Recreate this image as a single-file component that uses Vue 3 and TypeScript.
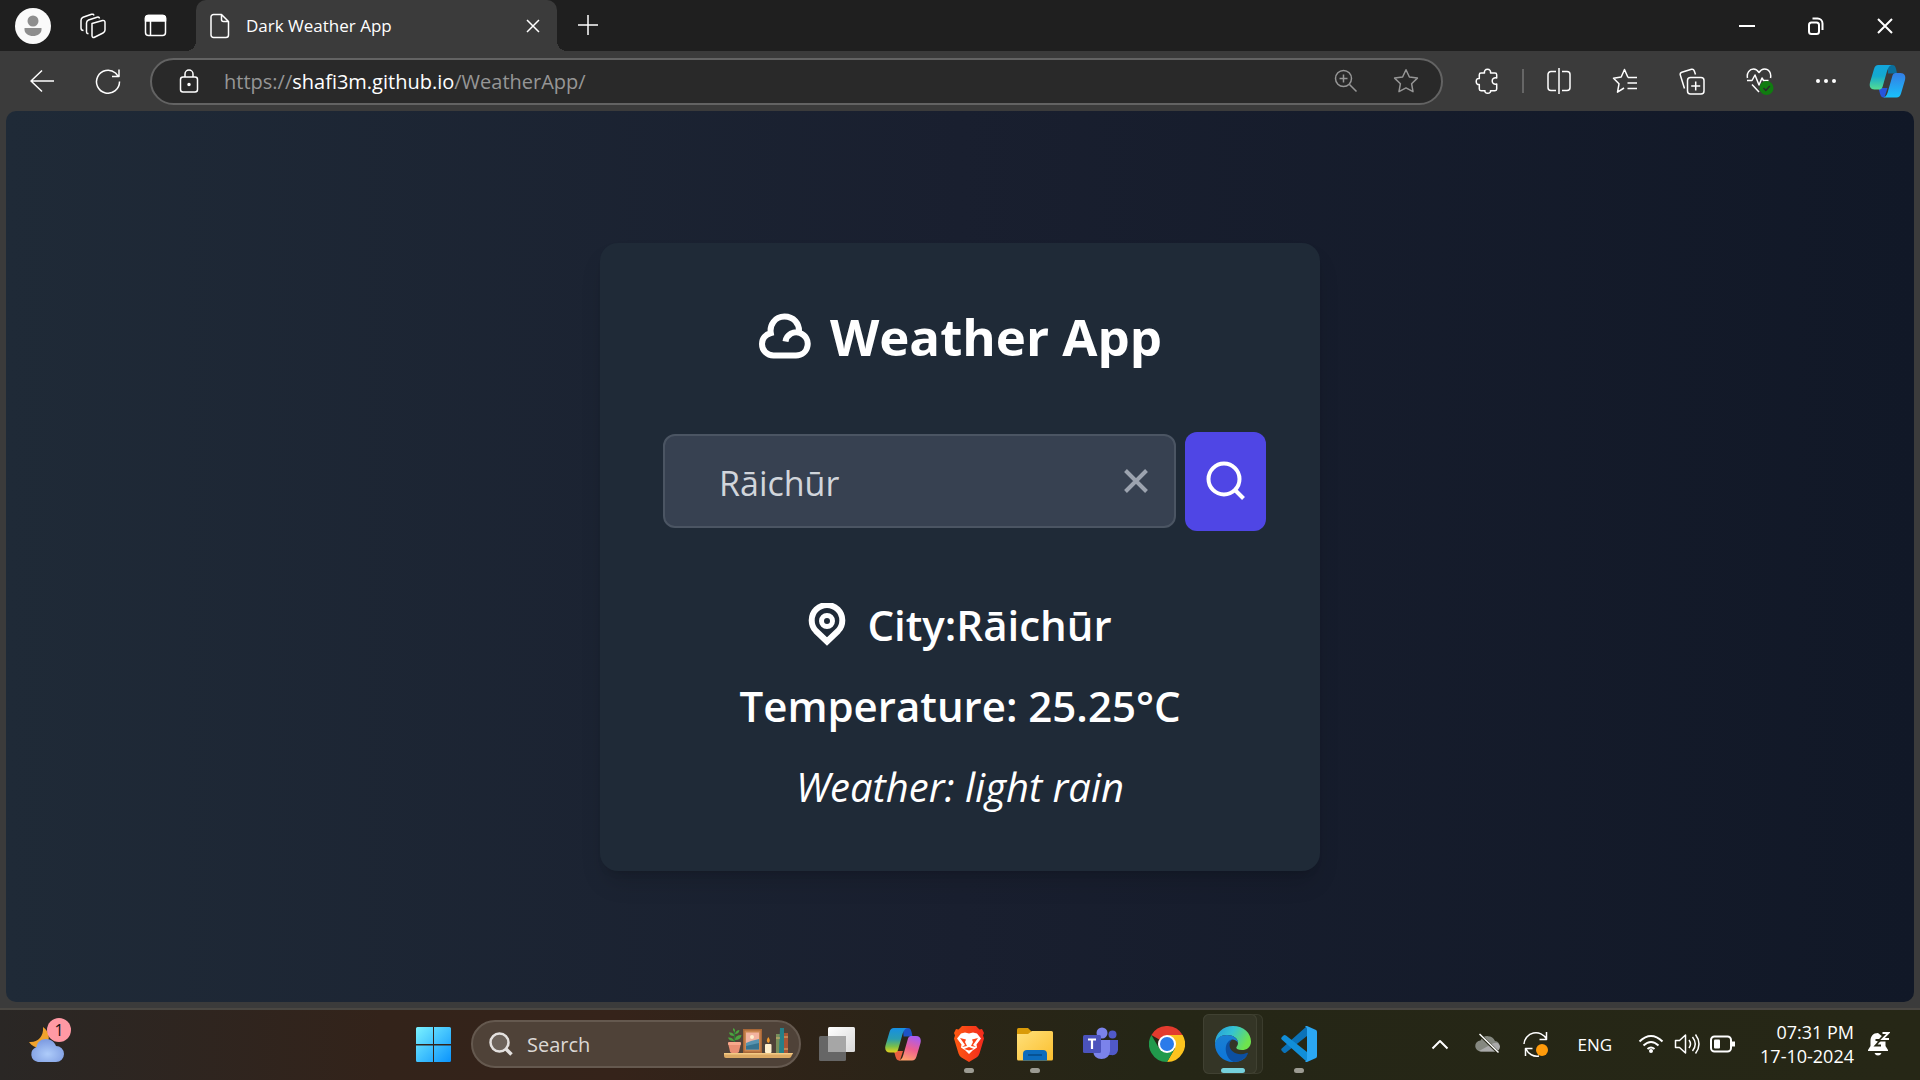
<script setup lang="ts">
import { ref } from 'vue'

interface Report {
  city: string
  temperature: number
  description: string
}

const query = ref('Rāichūr')
const taskSearch = ref('')
const report = ref<Report>({ city: 'Rāichūr', temperature: 25.25, description: 'light rain' })

function search() {
  const name = query.value.trim()
  if (name) report.value = { ...report.value, city: name }
}
</script>

<template>
  <div class="screen">
    <header class="tabstrip">
      <div class="strip-tools">
        <button class="plain avatar" aria-label="Profile">
          <svg width="36" height="36" viewBox="0 0 36 36">
            <circle cx="18" cy="18" r="18" fill="#fafafa" />
            <circle cx="18" cy="13" r="5.5" fill="#8e8e8e" />
            <path d="M9.5 20h17v1.5c0 4-4 6.500-8.500 6.500s-8.500-2.500-8.500-6.500z" fill="#8e8e8e" />
          </svg>
        </button>
        <button class="plain" aria-label="Workspaces">
          <svg width="26" height="26" viewBox="0 0 26 26" class="line">
            <path d="M12 10.500 22.500 7.500Q25 7 25 9.500V17Q25 19 23 20L15 24Q12 25.500 12 22.500Z" />
            <path d="M8.500 20.500Q6.500 21 6.500 18.500V10Q6.500 7.800 8.500 7L17 4.200Q19.200 3.600 19.500 5.500" />
            <path d="M3.500 17.500Q1 17.500 1 15V7.500Q1 5 3 4.200L11.500 1.300Q13.500.7 14 2.500" />
          </svg>
        </button>
        <button class="plain" aria-label="Tab actions menu">
          <svg width="23" height="23" viewBox="0 0 23 23" class="line">
            <rect x="1.500" y="1.500" width="20" height="20" rx="3" />
            <path d="M1.500 7V4a2.500 2.500 0 0 1 2.500-2.500h15A2.500 2.500 0 0 1 21.500 4v3z" fill="#fff" />
            <path d="M6.500 7v14" />
          </svg>
        </button>
      </div>
      <div class="tab">
        <svg width="20" height="26" viewBox="0 0 20 26" class="line">
          <path d="M3.500 1.500h8l7 7v13.500a2.500 2.500 0 0 1-2.500 2.500h-12.500A2.500 2.500 0 0 1 1 22V4a2.500 2.500 0 0 1 2.500-2.500zM11.500 1.500V6.500a2 2 0 0 0 2 2h5" />
        </svg>
        <span class="tab-title">Dark Weather App</span>
        <button class="plain" aria-label="Close tab">
          <svg width="14" height="14" viewBox="0 0 14 14" class="line"><path d="M1 1l12 12M13 1 1 13" /></svg>
        </button>
      </div>
      <button class="plain new-tab" aria-label="New tab">
        <svg width="22" height="22" viewBox="0 0 22 22" class="line"><path d="M11 1v20M1 11h20" /></svg>
      </button>
      <div class="window-buttons">
        <button class="plain" aria-label="Minimize">
          <svg width="16" height="16" viewBox="0 0 16 16" class="line bold"><path d="M0 8h16" /></svg>
        </button>
        <button class="plain" aria-label="Restore">
          <svg width="16" height="18" viewBox="0 0 16 18" class="line bold">
            <rect x="1" y="5.500" width="10" height="11.500" rx="2.500" />
            <path d="M4.500 1.500h5a5 5 0 0 1 5 5V13" />
          </svg>
        </button>
        <button class="plain" aria-label="Close window">
          <svg width="16" height="16" viewBox="0 0 16 16" class="line bold"><path d="M1 1l14 14M15 1 1 15" /></svg>
        </button>
      </div>
    </header>

    <nav class="toolbar">
      <button class="plain back" aria-label="Back">
        <svg width="26" height="24" viewBox="0 0 26 24" class="line"><path d="M25 12H2M13 1.500 2 12l11 10.500" /></svg>
      </button>
      <button class="plain refresh" aria-label="Refresh">
        <svg width="26" height="26" viewBox="0 0 26 26" class="line">
          <path d="M24.500 13.500A11.500 11.500 0 1 1 20.500 5L23.500 8.500M24 1.500v7h-7" />
        </svg>
      </button>
      <div class="address">
        <button class="plain" aria-label="Site information">
          <svg width="20" height="24" viewBox="0 0 20 24" class="line">
            <rect x="1.500" y="8" width="17" height="15" rx="2.500" />
            <path d="M6 8V5a4 4 0 0 1 8 0v3" />
            <circle cx="10" cy="15.500" r="1" fill="#fff" />
          </svg>
        </button>
        <div class="url" role="textbox" contenteditable="true" aria-label="Address" spellcheck="false">https://<b>shafi3m.github.io</b>/WeatherApp/</div>
        <button class="plain" aria-label="Zoom">
          <svg width="24" height="24" viewBox="0 0 24 24" class="line dim">
            <circle cx="9.500" cy="9.500" r="8" /><path d="M15.500 15.500 22.500 22.500M5.500 9.500h8M9.500 5.500v8" />
          </svg>
        </button>
        <button class="plain" aria-label="Add to favorites">
          <svg width="26" height="26" viewBox="0 0 26 26" class="line dim">
            <path d="M13 1.800 16.400 9 24.400 10.100 18.600 15.700 20 23.700 13 19.900 6 23.700 7.400 15.700 1.600 10.100 9.600 9z" />
          </svg>
        </button>
      </div>
      <div class="extensions">
        <button class="plain" aria-label="Extensions">
          <svg width="24" height="26" viewBox="0 0 24 26" class="line">
            <path d="M6 5h3.500c-.5-2 .8-3.800 3-3.800S16 3 15.500 5H20a1.700 1.700 0 0 1 1.700 1.700V10c-2.700-.6-4.500.8-4.500 3s1.800 3.600 4.500 3v5a1.700 1.700 0 0 1-1.700 1.700h-4.500c.5 1.400-.8 2.500-2.800 2.500S9.500 24 10 22.700H6A1.700 1.700 0 0 1 4.300 21v-4.500C2.500 17 1.200 15.500 1.200 13.500S2.500 10 4.300 10.500V6.700A1.700 1.700 0 0 1 6 5z" />
          </svg>
        </button>
        <span class="divider"></span>
        <button class="plain" aria-label="Split screen">
          <svg width="24" height="28" viewBox="0 0 24 28" class="line">
            <path d="M9 4.500H4A3 3 0 0 0 1 7.500v13a3 3 0 0 0 3 3h5M15 4.500h5a3 3 0 0 1 3 3v13a3 3 0 0 1-3 3h-5M12 1v26" />
          </svg>
        </button>
        <button class="plain" aria-label="Favorites">
          <svg width="26" height="26" viewBox="0 0 26 26" class="line">
            <path d="M16 9.500 12.500 1.500 9.200 9 1.500 10.200 7 15.800 5.500 24.200 12 20M16 9.500h9M15.500 15h9.500M15.500 20.500h9.500" />
          </svg>
        </button>
        <button class="plain" aria-label="Collections">
          <svg width="26" height="27" viewBox="0 0 26 27" class="line">
            <rect x="8.500" y="9.500" width="16.500" height="16.500" rx="3" />
            <path d="M16.700 13.500v9M12.200 18h9M5.500 20.500 1.300 7Q.7 5 2.800 4.200L12.500 1.300Q14.500.8 15.200 2.800L16.500 6.500" />
          </svg>
        </button>
        <button class="plain" aria-label="Browser essentials">
          <svg width="28" height="28" viewBox="0 0 28 28" class="line">
            <path d="M1.500 11C.5 6 3.500 2 7.500 2c2.500 0 4.200 1.500 5.500 3.500C14.300 3.500 16 2 18.500 2c4.500 0 7 4 6 9M1 13.500h5l3-5.500 4 10 3-7 1.500 2.500h5M6 17.500l7 7.500" />
            <circle cx="20.500" cy="21" r="7" fill="#107c10" stroke="none" />
            <path d="M17.500 21l2.300 2.500 4-4.500" stroke="#2b2b2b" />
          </svg>
        </button>
        <button class="plain" aria-label="Settings and more">
          <svg width="22" height="6" viewBox="0 0 22 6" fill="#fff">
            <circle cx="3" cy="3" r="2" /><circle cx="11" cy="3" r="2" /><circle cx="19" cy="3" r="2" />
          </svg>
        </button>
        <button class="plain copilot" aria-label="Copilot">
          <svg width="37" height="34" viewBox="0 0 36 34">
            <defs>
              <linearGradient id="ca" x1="0" y1="0" x2="0" y2="1"><stop offset="0" stop-color="#12a5dc" /><stop offset=".45" stop-color="#14a9cf" /><stop offset="1" stop-color="#55dd91" /></linearGradient>
              <linearGradient id="cb" x1="0" y1="0" x2="0" y2="1"><stop offset="0" stop-color="#347de5" /><stop offset="1" stop-color="#19c1fb" /></linearGradient>
            </defs>
            <path d="M18 1h5c3 0 3.500 3 4.500 8.500h-9z" fill="#0b6f9c" />
            <path d="M9 24h9l-3 9.500h-1c-3 0-3.500-4-5-9.500z" fill="#2654dc" />
            <path d="M9 1h13c-3 1-4 4-5 8l-4 14c-.7 2-2 2.500-4 2.500H5c-4 0-5.500-3-4.500-7L4.500 5c.8-2.700 2-4 4.500-4z" fill="url(#ca)" />
            <path d="M27 33.500H14c3-1 4-4 5-8l4-14c.7-2 2-2.500 4-2.500h4c4 0 5.500 3 4.500 7L31.500 29.500c-.8 2.700-2 4-4.500 4z" fill="url(#cb)" />
          </svg>
        </button>
      </div>
    </nav>

    <div class="frame">
      <main class="page">
        <section class="card">
          <h1>
            <svg width="54" height="48" viewBox="0 0 54 48" fill="none" stroke="#fff" stroke-width="6">
              <path d="M27.500 29.500C28.500 22.500 36 18.500 42 21C48 23.500 50.500 28.500 49.500 34C48.500 39.500 44 43.500 38 43.500H15.500C9 43.500 4 38.500 4 32C4 26.500 7.500 22.500 12.800 21C11.500 13.500 16.500 4.500 26.500 4.500C35.500 4.500 41.500 11.500 41 20" />
            </svg>
            <span>Weather App</span>
          </h1>
          <form class="search" @submit.prevent="search">
            <div class="field">
              <input v-model="query" type="text" aria-label="City name" spellcheck="false" />
              <button type="button" class="plain" aria-label="Clear" @click="query = ''">
                <svg width="24" height="24" viewBox="0 0 24 24" fill="none" stroke="#9ca3af" stroke-width="4"><path d="M1.500 1.500l21 21M22.500 1.500l-21 21" /></svg>
              </button>
            </div>
            <button class="go" aria-label="Search">
              <svg width="40" height="40" viewBox="0 0 40 40" fill="none" stroke="#fff" stroke-width="4"><circle cx="18" cy="18" r="15.500" /><path d="M28.500 28.500 37.500 37.500" /></svg>
            </button>
          </form>
          <div class="report">
            <h2>
              <svg width="38" height="44" viewBox="0 0 38 44" fill="none" stroke="#fff" stroke-width="6">
                <path d="M19 38.500 8 28A15.300 15.300 0 1 1 30 28Z" /><circle cx="19" cy="18" r="5.500" stroke-width="5" />
              </svg>
              <span>City:{{ report.city }}</span>
            </h2>
            <p class="temp">Temperature: {{ report.temperature }}°C</p>
            <p class="sky">Weather: {{ report.description }}</p>
          </div>
        </section>
      </main>
    </div>

    <footer class="taskbar">
      <div class="widget">
        <button class="plain" aria-label="Weather widget, 1 alert">
          <svg width="38" height="38" viewBox="0 0 38 38">
            <defs><radialGradient id="wc" cx=".5" cy=".65" r=".6"><stop offset="0" stop-color="#aeccfa" /><stop offset="1" stop-color="#7f9de2" /></radialGradient></defs>
            <path d="M14 2c6 4 8 12 3 18-5 5-13 3-17-3C8 18 15 12 14 2z" fill="#f0a22c" />
            <path d="M9 37a9 8 0 0 1-1.500-15C8 17 12 14 17 14c5 0 8.500 3 10 7a8 8 0 0 1 0 16z" fill="url(#wc)" />
          </svg>
          <span class="badge">1</span>
        </button>
      </div>
      <div class="apps">
        <button class="plain start" aria-label="Start">
          <svg width="35" height="35" viewBox="0 0 35 35">
            <defs><linearGradient id="wn" x1="0" y1="0" x2="35" y2="35" gradientUnits="userSpaceOnUse"><stop offset="0" stop-color="#7bf2ff" /><stop offset="1" stop-color="#0a93fc" /></linearGradient></defs>
            <path d="M1.500 0H17v17H0V1.500Q0 0 1.500 0zM18 0h15.500Q35 0 35 1.500V17H18zM0 18.500h17V35H1.500Q0 35 0 33.500zM18 18.500h17v15q0 1.500-1.500 1.500H18z" fill="url(#wn)" />
          </svg>
        </button>
        <label class="task-search">
          <svg width="24" height="24" viewBox="0 0 24 24" fill="none" stroke="#e4e1df" stroke-width="2.500"><circle cx="10.500" cy="10.500" r="9" fill="#6d635b" /><path d="M17 17l5.500 5.500" stroke-width="3.500" /></svg>
          <input v-model="taskSearch" type="text" placeholder="Search" aria-label="Search" />
          <svg width="70" height="32" viewBox="0 0 70 32">
            <path d="M0 25h69l-2 4q-.6 1-2 1H2Q0 30 0 28z" fill="#dba964" /><path d="M0 25h69l-1 1.500H0z" fill="#f3c984" />
            <path d="M4 15h13l-2 8.500q-.5 1.500-2 1.500H8q-1.500 0-2-1.500z" fill="#e98f73" /><rect x="4" y="14" width="13" height="3" rx="1" fill="#f7a78b" />
            <path d="M10.500 14V3" stroke="#2f7a35" stroke-width="1.500" />
            <path d="M10 13Q5 13 4 9.500 9 9 10 13zM11 12q0-5 6.500-5Q17 12 11 12zM10 8Q5.500 8 5 4.500 10 4 10 8zM11 6Q12 2 15.500 2 15 6 11 6zM10.500 4Q8 2 9.500 0 12 2 10.500 4z" fill="#4ca33f" />
            <rect x="19" y="1" width="19" height="24" fill="#a86738" /><rect x="20.500" y="2.500" width="16" height="21" fill="#cb8750" /><rect x="22" y="4.500" width="13" height="17" fill="#f2b3a0" />
            <path d="M22 15l5-2 8-2v10.500H22z" fill="#5794b0" /><path d="M22 18l13-3v6.500H22z" fill="#35738f" /><circle cx="28" cy="9" r="2" fill="#fff0ce" />
            <rect x="41" y="16" width="6.500" height="9" rx="1" fill="#fff0cd" /><path d="M44.300 9q3 4 0 6-3-2 0-6z" fill="#f39a2b" />
            <rect x="52" y="6" width="4" height="19" fill="#788e5b" /><path d="M56 0h4v25h-5z" fill="#267f88" /><rect x="60" y="5" width="4" height="20" fill="#a75535" /><path d="M60 9h4M60 21h4M52 10h4" stroke="#ddb46f" />
          </svg>
        </label>
        <button class="plain app" aria-label="Task view">
          <svg width="36" height="36" viewBox="0 0 36 36">
            <defs><linearGradient id="tv" x1="0" y1="0" x2="1" y2="1"><stop offset="0" stop-color="#fff" /><stop offset="1" stop-color="#d8d8d8" /></linearGradient></defs>
            <rect x="9" y="1" width="27" height="25" rx="1.500" fill="url(#tv)" /><rect y="10" width="27" height="25" rx="1.500" fill="#666" /><path d="M9 10h18v16H9z" fill="#a6a6a6" />
          </svg>
        </button>
        <button class="plain app" aria-label="Copilot">
          <svg width="36" height="34" viewBox="0 0 36 34">
            <defs>
              <linearGradient id="cc" x1="0" y1="0" x2="0" y2="1"><stop offset="0" stop-color="#168fe4" /><stop offset=".45" stop-color="#2a9db0" /><stop offset=".75" stop-color="#78be4c" /><stop offset="1" stop-color="#e6d21c" /></linearGradient>
              <linearGradient id="cd" x1=".6" y1="0" x2=".3" y2="1"><stop offset="0" stop-color="#a95cf0" /><stop offset=".5" stop-color="#ed5f91" /><stop offset="1" stop-color="#ffa26b" /></linearGradient>
            </defs>
            <path d="M18 1h5c3 0 3.500 3 4.500 8.500h-9z" fill="#1d53c7" />
            <path d="M9 24h9l-3 9.500h-1c-3 0-3.500-4-5-9.500z" fill="#e95d3f" />
            <path d="M9 1h13c-3 1-4 4-5 8l-4 14c-.7 2-2 2.500-4 2.500H5c-4 0-5.500-3-4.500-7L4.500 5c.8-2.700 2-4 4.500-4z" fill="url(#cc)" />
            <path d="M27 33.500H14c3-1 4-4 5-8l4-14c.7-2 2-2.500 4-2.500h4c4 0 5.500 3 4.500 7L31.500 29.500c-.8 2.700-2 4-4.500 4z" fill="url(#cd)" />
          </svg>
        </button>
        <button class="plain app running" aria-label="Brave">
          <svg width="32" height="36" viewBox="0 0 32 36">
            <defs><linearGradient id="br"><stop offset="0" stop-color="#ff5a12" /><stop offset="1" stop-color="#f32a1d" /></linearGradient></defs>
            <path d="M9 0h14l3.500 3.500 2.500-.5 2 4-1 2.500 1 3-4.500 15q-.8 2.500-3 4L16 36l-7.500-4.500q-2.200-1.500-3-4L1 12.500l1-3L1 7l2-4 2.500.5z" fill="url(#br)" />
            <path d="M16 7.500 20 6.500l4 1 4 5-4.500 6 .5 3-4.500 3L16 28l-3.500-3.500-4.500-3 .5-3-4.500-6 4-5 4-1z" fill="#fff" />
            <path d="M7 12l6 1.500-1 2.500 2 4-5 1 3-2zM25 12l-6 1.500 1 2.500-2 4 5 1-3-2zM11 23l5-2 5 2-5 1.500z" fill="#fb4418" />
          </svg>
        </button>
        <button class="plain app running" aria-label="File Explorer">
          <svg width="36" height="36" viewBox="0 0 36 36">
            <defs><linearGradient id="fe" x1="0" y1="0" x2="1" y2="1"><stop offset="0" stop-color="#ffe07b" /><stop offset="1" stop-color="#fbbf2e" /></linearGradient></defs>
            <path d="M0 3.500Q0 2 1.500 2H11l4 4v3H0z" fill="#d99a08" /><path d="M0 8h11l4-3h19.500Q36 5 36 6.500V33q0 1.500-1.500 1.500h-33Q0 34.500 0 33z" fill="url(#fe)" />
            <path d="M6 34.500V28q0-4 4-4h16q4 0 4 4v6.500z" fill="#0c6cbd" /><path d="M11 29h14" stroke="#054a87" stroke-width="1.500" />
          </svg>
        </button>
        <button class="plain app" aria-label="Teams">
          <svg width="36" height="36" viewBox="0 0 36 36">
            <circle cx="29.500" cy="8.500" r="4" fill="#5059c9" /><path d="M25 14h10v10q-1 6-7 5h-3z" fill="#5059c9" /><circle cx="19" cy="7" r="5.500" fill="#7b83eb" /><path d="M10 14h17v11q-1 8-8.500 8T10 25z" fill="#7b83eb" />
            <rect y="9" width="18" height="18" rx="1.500" fill="#4b53bc" /><path d="M5 13.500h8M9 13.500V23" stroke="#fff" stroke-width="2.200" />
          </svg>
        </button>
        <button class="plain app" aria-label="Chrome">
          <svg width="36" height="36" viewBox="0 0 36 36">
            <path d="M18 18 2.400 9A18 18 0 0 1 33.600 9z" fill="#e33b2e" /><path d="M18 9h15.600A18 18 0 0 1 18 36l7.800-13.500z" fill="#fcc31e" /><path d="M2.400 9 10.200 22.500 18 27 L18 36A18 18 0 0 1 2.400 9zM10 22l8 5 7.500-4L18 36z" fill="#219a4c" />
            <circle cx="18" cy="18" r="9" fill="#fff" /><circle cx="18" cy="18" r="7" fill="#2a7bea" />
          </svg>
        </button>
        <button class="plain app running active" aria-label="Edge">
          <svg width="36" height="36" viewBox="0 0 36 36">
            <defs>
              <linearGradient id="eg" x1="0" y1="0" x2="1" y2=".4"><stop offset="0" stop-color="#2399dc" /><stop offset=".5" stop-color="#35c3d2" /><stop offset="1" stop-color="#6ee34d" /></linearGradient>
              <linearGradient id="eh" x1="0" y1="0" x2="0" y2="1"><stop offset="0" stop-color="#1b80d2" /><stop offset="1" stop-color="#0b75db" /></linearGradient>
            </defs>
            <path d="M0 18C0 7 8 0 18 0c11 0 18 7.500 18 15.500 0 6-4.500 8.500-9 8.500-4 0-5.700-1-5.700-2.200 0-1.200 1.700-1.800 1.700-4.800C23 12 18 9 12 9 6 9 2 12 0 18z" fill="url(#eg)" />
            <path d="M0 18C1 12 6 9 12 9c6 0 11 3.500 11 8-1-2-3-3.500-6-3.500-5 3-4.500 12.500 3 17 4 2.500 8 1 12-1C29 34 24 36 18 36 8 36 0 28 0 18z" fill="url(#eh)" />
            <path d="M17 13.500C7.500 16 9.500 32 18.500 36 25 36 30 33 32.500 28.500c1-1.500 0-2-1-1.500-8 3.500-17-1-17-8 0-2.500 1-4.500 2.500-5.500z" fill="#0c4fa1" />
          </svg>
        </button>
        <button class="plain app running" aria-label="Visual Studio Code">
          <svg width="36" height="36" viewBox="0 0 36 36">
            <path d="M26 0v10L5 26.500q-1.500 1-2.500 0L.7 24.800q-1-1.300 0-2.400z" fill="#0b72b8" /><path d="M26 36V26L5 9.500q-1.500-1-2.500 0L.7 11.200q-1 1.300 0 2.400z" fill="#118ed8" /><path d="M26 0l9 4q1 .7 1 2v24q0 1.300-1 2l-9 4q-1 .3-2-1 2 .5 2-2V3q0-2.500-2-2 1-1.300 2-1z" fill="#2ba7f3" />
          </svg>
        </button>
      </div>
      <div class="tray">
        <button class="plain chevron" aria-label="Show hidden icons">
          <svg width="18" height="11" viewBox="0 0 18 11" class="line bold"><path d="M1.500 9.500 9 2l7.500 7.500" /></svg>
        </button>
        <button class="plain cloud" aria-label="OneDrive">
          <svg width="26" height="22" viewBox="0 0 26 22"><path d="M6 18.500a5.500 5.500 0 0 1-.5-11A8 8 0 0 1 20 8a5.300 5.300 0 0 1 0 10.500z" fill="#858880" /><path d="M4 18l11-6q8-5 10 1.500-.5 5-5 5H6z" fill="#aaa" /><path d="M4 1l19 18.500" stroke="#262716" stroke-width="3" /><path d="M4.500 1l19 18.500" stroke="#fff" stroke-width="1.500" /></svg>
        </button>
        <button class="plain sync" aria-label="Windows Update">
          <svg width="26" height="26" viewBox="0 0 26 26" class="line">
            <path d="M1 13A12 12 0 0 1 23.500 8M23.500 1v7.500h-7M2.500 25v-7.500h7M3 18a12 12 0 0 0 13 7" /><circle cx="19" cy="19" r="6" fill="#ff9b0b" stroke="none" />
          </svg>
        </button>
        <button class="plain lang">ENG</button>
        <button class="plain quick" aria-label="Network, volume and battery">
          <svg width="26" height="20" viewBox="0 0 26 20" class="line bold"><path d="M1.500 7.500q11.500-11 23 0M5.500 11.500q7.500-7 15 0M9.500 15q3.500-3 7 0" /><circle cx="13" cy="17" r="2" fill="#fff" stroke="none" /></svg>
          <svg width="26" height="22" viewBox="0 0 26 22" class="line"><path d="M1.500 7.500h4l6-5.500v18l-6-5.500h-4zM15 7q3 4 0 8M18.500 4q5.500 7 0 14M21.500 1.500q7 9.500 0 19" /></svg>
          <svg width="26" height="18" viewBox="0 0 26 18" class="line bold"><rect x="1" y="1.500" width="20" height="15" rx="3.500" /><rect x="4" y="4.500" width="6" height="9" rx="1" fill="#fff" stroke="none" /><path d="M23.500 6.500v5" stroke-width="3" /></svg>
        </button>
        <button class="plain clock"><span>07:31 PM</span><span>17-10-2024</span></button>
        <button class="plain" aria-label="Notifications, do not disturb">
          <svg width="22" height="26" viewBox="0 0 22 26">
            <path d="M10 2c-5 0-7.500 3.500-7.500 8v5L0 19v1h20v-1l-2.500-4V8L10 2zM6.500 22h7q-1 2.500-3.500 2.500T6.500 22z" fill="#fff" />
            <path d="M7.500 9h5l-5 5.500h5.500" fill="none" stroke="#262716" stroke-width="1.800" /><path d="M14.500 1h6.500l-6.500 7h6.500" fill="none" stroke="#262716" stroke-width="5" /><path d="M14.500 2h6l-6 6h6.500" fill="none" stroke="#fff" stroke-width="1.800" />
          </svg>
        </button>
      </div>
    </footer>
  </div>
</template>

<style>
body {
  background: #3b3b3b;
}
</style>

<style scoped>
* {
  box-sizing: border-box;
}
.screen {
  display: flex;
  flex-direction: column;
  min-height: 100vh;
  background: #3b3b3b;
  color: #fff;
  font-family: "Open Sans", "Noto Sans", sans-serif;
}
svg {
  display: block;
  flex: none;
}
.plain {
  display: flex;
  align-items: center;
  justify-content: center;
  padding: 0;
  border: 0;
  background: none;
  color: inherit;
  font: inherit;
}
.line {
  fill: none;
  stroke: #fff;
  stroke-width: 1.500;
  stroke-linejoin: round;
}
.bold {
  stroke-width: 2;
}
.dim {
  stroke: #969696;
}
.tabstrip {
  display: flex;
  height: 51px;
  background: #1f1f1f;
}
.strip-tools {
  display: flex;
  align-items: center;
  gap: 29px;
  padding: 0 29px 0 15px;
}
.strip-tools .plain + .plain + .plain {
  margin-left: 9px;
}
.tab {
  position: relative;
  display: flex;
  align-items: center;
  width: 361px;
  padding: 0 17px 0 14px;
  background: #3b3b3b;
  border-radius: 10px 10px 0 0;
}
.tab::before,
.tab::after {
  content: "";
  position: absolute;
  bottom: 0;
  width: 10px;
  height: 10px;
}
.tab::before {
  right: 100%;
  background: radial-gradient(circle at 0 0, transparent 10px, #3b3b3b 10px);
}
.tab::after {
  left: 100%;
  background: radial-gradient(circle at 100% 0, transparent 10px, #3b3b3b 10px);
}
.tab-title {
  flex: 1;
  padding-left: 16px;
  font-size: 17px;
  white-space: nowrap;
}
.new-tab {
  margin-left: 20px;
  padding-bottom: 2px;
}
.window-buttons {
  display: flex;
  align-items: center;
  gap: 53px;
  margin-left: auto;
  padding-right: 27px;
}
.toolbar {
  display: flex;
  align-items: center;
  height: 60px;
  padding: 0 14px 0 29px;
}
.refresh {
  margin-left: 40px;
}
.address {
  display: flex;
  flex: 1;
  align-items: center;
  height: 47px;
  margin-left: 29px;
  padding: 0 22px 0 27px;
  border: 2px solid #636363;
  border-radius: 24px;
  background: #292929;
}
.url {
  flex: 1;
  margin-left: 25px;
  color: #969696;
  font-size: 20px;
  white-space: nowrap;
  outline: none;
}
.url b {
  color: #fff;
  font-weight: 400;
}
.address .plain + .plain {
  margin-left: 35px;
}
.extensions {
  display: flex;
  align-items: center;
  gap: 41px;
  margin-left: 32px;
}
.divider {
  width: 2px;
  height: 24px;
  margin: 0 -18px;
  background: #666;
}
.copilot {
  margin-left: -9px;
}
.frame {
  display: flex;
  flex: 1;
  padding: 0 6px 6px;
  border-bottom: 2px solid #4a4742;
}
.page {
  display: flex;
  flex: 1;
  align-items: center;
  justify-content: center;
  border-radius: 10px;
  background: linear-gradient(to right, #1f2a37, #191f2f 50%, #111827);
}
.card {
  width: 720px;
  max-width: 100%;
  padding: 57px 54px 60px;
  border-radius: 18px;
  background: #1f2a37;
  box-shadow: 0 15px 24px -5px rgba(0, 0, 0, 0.15), 0 6px 9px -6px rgba(0, 0, 0, 0.15);
}
h1,
h2 {
  display: flex;
  align-items: center;
  justify-content: center;
}
h1 {
  gap: 18px;
  margin: 0 0 60px;
  font-size: 51px;
  font-weight: 700;
  line-height: 72px;
}
.search {
  display: flex;
  align-items: center;
  gap: 9px;
  margin-left: 9px;
}
.field {
  display: flex;
  flex: 1;
  align-items: center;
  min-width: 0;
  height: 94px;
  padding: 0 26px 0 54px;
  border: 2px solid #4b5563;
  border-radius: 12px;
  background: #374151;
}
.field input {
  flex: 1;
  min-width: 0;
  padding: 4px 0 0;
  border: 0;
  outline: none;
  background: none;
  color: #d1d5db;
  font: inherit;
  font-size: 34px;
}
.go {
  display: flex;
  flex: none;
  align-items: center;
  justify-content: center;
  width: 81px;
  height: 99px;
  padding: 0;
  border: 0;
  border-radius: 12px;
  background: #4f46e5;
}
.report {
  display: flex;
  flex-direction: column;
  gap: 33px;
  margin-top: 70px;
  text-align: center;
  line-height: 48px;
}
h2,
p {
  margin: 0;
}
h2 {
  gap: 21px;
}
h2,
.temp {
  font-size: 42px;
  font-weight: 600;
}
.sky {
  font-size: 40px;
  font-style: italic;
}
.taskbar {
  display: flex;
  align-items: center;
  height: 70px;
  padding-bottom: 2px;
  background: linear-gradient(to right, #2a2725, #33231a 20%, #35231a 32%, #2a2417 48%, #252616 60%, #262716);
}
.widget {
  flex: 0 1 416px;
  padding-left: 29px;
}
.widget .plain {
  position: relative;
}
.badge {
  position: absolute;
  top: -7px;
  left: 18px;
  width: 24px;
  height: 24px;
  border-radius: 12px;
  background: #ff99a4;
  color: #111;
  font-size: 16px;
  line-height: 24px;
}
.apps {
  display: flex;
  align-items: center;
  gap: 12px;
}
.task-search {
  display: flex;
  align-items: center;
  width: 330px;
  height: 48px;
  margin-left: 8px;
  padding: 0 5px 0 16px;
  border: 2px solid #65594f;
  border-radius: 24px;
  background: #4f4238;
}
.task-search input {
  flex: 1;
  min-width: 0;
  padding: 0 0 0 14px;
  border: 0;
  outline: none;
  background: none;
  color: #dcd8d5;
  font: inherit;
  font-size: 20px;
}
.task-search input::placeholder {
  color: #dcd8d5;
  opacity: 1;
}
.app {
  position: relative;
  width: 54px;
  height: 60px;
}
.task-search + .app {
  margin-left: -3px;
}
.running::after {
  content: "";
  position: absolute;
  bottom: 1px;
  left: 22px;
  width: 10px;
  height: 5px;
  border-radius: 3px;
  background: #9c9b92;
}
.active {
  isolation: isolate;
}
.active::before {
  content: "";
  position: absolute;
  z-index: -1;
  top: 0;
  bottom: 0;
  left: -3px;
  width: 54px;
  border-radius: 6px;
  background: #343526;
  box-shadow: inset 0 0 0 1px #404132, 6px 0 0 -1px #2d2e1f, 6px 0 0 0 #3b3c2d;
}
.active::after {
  left: 15px;
  width: 24px;
  background: #76d1dc;
}
.tray {
  display: flex;
  align-items: center;
  margin-left: auto;
  padding-right: 30px;
}
.cloud {
  margin-left: 26px;
}
.sync {
  margin-left: 22px;
}
.lang {
  margin-left: 28px;
  font-size: 17px;
}
.quick {
  gap: 10px;
  margin-left: 26px;
}
.clock {
  flex-direction: column;
  align-items: flex-end;
  margin: 0 14px 0 24px;
  font-size: 18px;
  line-height: 24px;
}
</style>
